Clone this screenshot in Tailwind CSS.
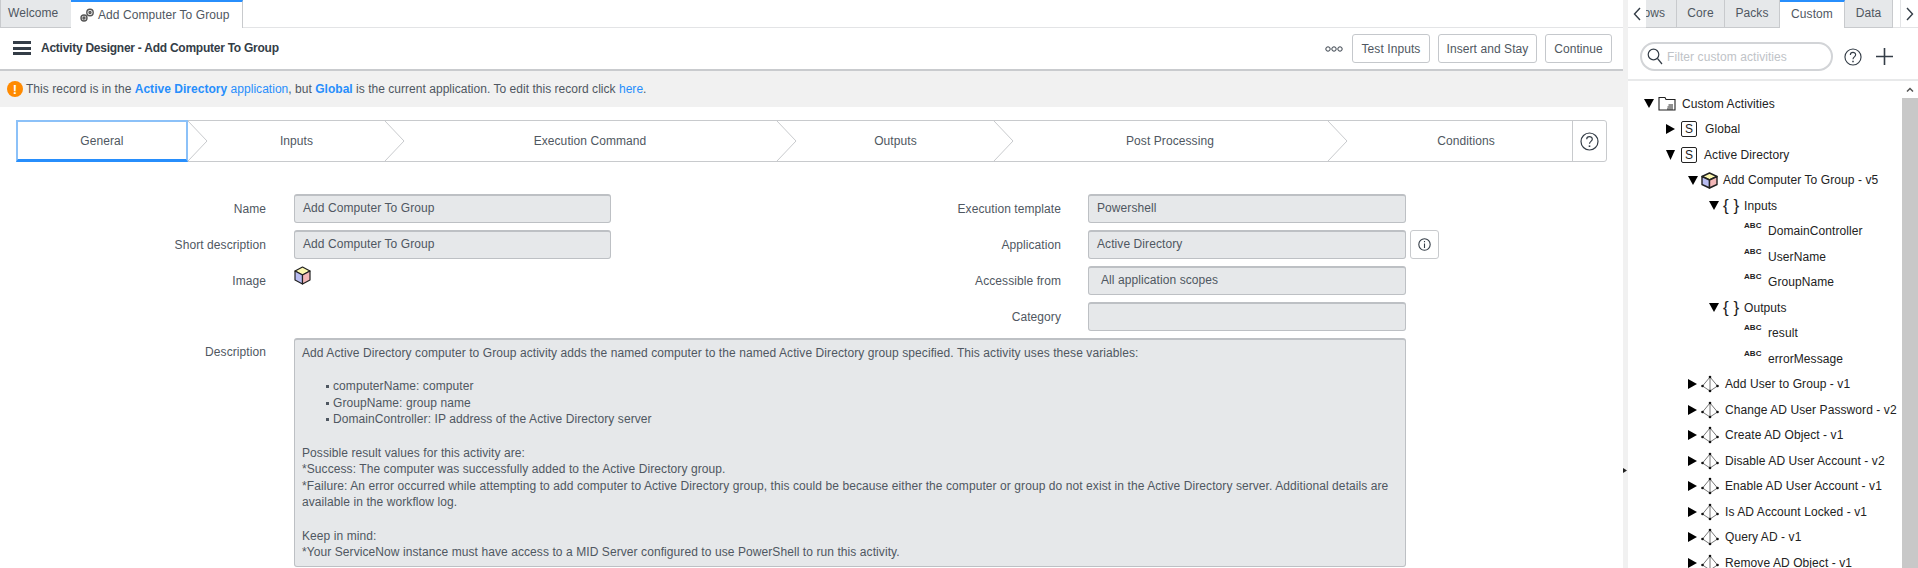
<!DOCTYPE html>
<html lang="en">
<head>
    <meta charset="UTF-8">
    <title>Activity Designer - Add Computer To Group</title>
    <script src="https://cdn.jsdelivr.net/npm/@tailwindcss/browser@4"></script>
</head>
<body class="h-[568px] w-[1918px] overflow-hidden bg-white text-[12px] tracking-[0.08px] text-[#343d47] font-['Liberation_Sans',Arial,sans-serif]">
<div class="flex h-[568px]">

    <!-- Designer column -->
    <div class="w-[1623px] h-full overflow-hidden">
        <!-- Tabs -->
        <div class="flex h-[28px] border-b border-[#e3e4e6]">
            <div class="w-[72px] h-[28px] bg-[#e6e8ea] border border-t-0 border-[#c8cacd] pl-[7px] leading-[26px] text-[#4f5761]">Welcome</div>
            <div class="flex items-center w-[172px] h-[28px] -ml-px bg-white border-t-2 border-t-[#278efc] border-r border-r-[#c8cacd] pl-[8px] gap-[3px] text-[#4f5761]">
                <svg class="w-[16px] h-[16px]" viewBox="0 0 16 16" fill="none" stroke="#555" stroke-width="1.4"><circle cx="5" cy="11" r="3"/><circle cx="5" cy="11" r="1"/><circle cx="11" cy="5.5" r="3.2"/><circle cx="11" cy="5.5" r="1"/></svg>
                <span>Add Computer To Group</span>
            </div>
        </div>

        <!-- Header -->
        <div class="flex items-center h-[43px] border-b-2 border-[#c9cbce]">
            <div class="flex flex-col gap-[2.5px] ml-[13px] mb-[1px] w-[18px]">
                <div class="h-[3px] bg-[#343d47]"></div>
                <div class="h-[3px] bg-[#343d47]"></div>
                <div class="h-[3px] bg-[#343d47]"></div>
            </div>
            <h1 class="ml-[10px] mb-[2px] font-bold text-[12px] tracking-[-0.25px] text-[#343d47]">Activity Designer - Add Computer To Group</h1>
            <div class="ml-auto flex items-center mr-[11px]">
                <svg class="w-[18px] h-[6px] mr-[9px]" viewBox="0 0 18 6" fill="none" stroke="#343d47"><circle cx="3" cy="3" r="2.2"/><circle cx="9" cy="3" r="2.2"/><circle cx="15" cy="3" r="2.2"/></svg>
                <button class="h-[29px] w-[78px] border border-[#c5c8cc] rounded-[3px] text-[#4f5761] bg-white">Test Inputs</button>
                <button class="ml-[8px] h-[29px] w-[99px] border border-[#c5c8cc] rounded-[3px] text-[#4f5761] bg-white">Insert and Stay</button>
                <button class="ml-[8px] h-[29px] w-[67px] border border-[#c5c8cc] rounded-[3px] text-[#4f5761] bg-white">Continue</button>
            </div>
        </div>

        <!-- Warning -->
        <div class="flex items-center h-[36px] bg-[#f1f1f1] pl-[7px] text-[#4f5761]">
            <div class="flex items-center justify-center w-[16px] h-[16px] rounded-full bg-[#ff8a00] text-white font-bold text-[13px] leading-none">!</div>
            <p class="ml-[3px] tracking-[0.03px]">This record is in the <b class="text-[#278efc]">Active Directory</b> <span class="text-[#278efc]">application</span>, but <b class="text-[#278efc]">Global</b> is the current application. To edit this record click <span class="text-[#278efc]">here</span>.</p>
        </div>

        <!-- Stepper -->
        <div class="flex h-[42px] mt-[13px] ml-[16px] w-[1591px] border border-[#c8cacd] rounded-[3px] text-[#4f5761]">
            <div class="flex items-center justify-center w-[172px] -my-px -ml-px border-2 border-[#8cc1f8] border-b-[3px] border-b-[#278efc]">General</div>
            <div class="relative flex items-center justify-center w-[197px] pl-[20px]">
                Inputs
                <svg class="absolute top-0 left-[-1px] w-[22px] h-[40px]" viewBox="0 0 22 40" fill="none" stroke="#c8cacd"><path d="M1 0 L20 20 L1 40"/></svg>
            </div>
            <div class="relative flex items-center justify-center w-[392px] pl-[18px]">
                Execution Command
                <svg class="absolute top-0 left-[-1px] w-[22px] h-[40px]" viewBox="0 0 22 40" fill="none" stroke="#c8cacd"><path d="M1 0 L20 20 L1 40"/></svg>
            </div>
            <div class="relative flex items-center justify-center w-[217px] pl-[20px]">
                Outputs
                <svg class="absolute top-0 left-[-1px] w-[22px] h-[40px]" viewBox="0 0 22 40" fill="none" stroke="#c8cacd"><path d="M1 0 L20 20 L1 40"/></svg>
            </div>
            <div class="relative flex items-center justify-center w-[334px] pl-[18px]">
                Post Processing
                <svg class="absolute top-0 left-[-1px] w-[22px] h-[40px]" viewBox="0 0 22 40" fill="none" stroke="#c8cacd"><path d="M1 0 L20 20 L1 40"/></svg>
            </div>
            <div class="relative flex items-center justify-center w-[244px] pl-[32px]">
                Conditions
                <svg class="absolute top-0 left-[-1px] w-[22px] h-[40px]" viewBox="0 0 22 40" fill="none" stroke="#c8cacd"><path d="M1 0 L20 20 L1 40"/></svg>
            </div>
            <div class="flex items-center justify-center flex-1 border-l border-[#c8cacd]">
                <svg class="w-[19px] h-[19px]" viewBox="0 0 19 19" fill="none" stroke="#343d47" stroke-width="1.2"><circle cx="9.5" cy="9.5" r="8.5"/><path d="M6.7 7.3 C6.7 3.8 12.3 3.8 12.3 7.2 C12.3 9.4 9.5 9.4 9.5 11.8"/><path d="M9.5 13.4 V15" stroke-width="1.6"/></svg>
            </div>
        </div>

        <!-- Form -->
        <div class="flex mt-[32px] text-[#4f5761]">
            <div class="w-[700px]">
                <div class="flex items-center h-[29px] mb-[7px]">
                    <label class="w-[266px] text-right">Name</label>
                    <div class="ml-[28px] w-[317px] h-[29px] bg-[#e6e8ea] border border-[#bdc0c4] border-t-2 rounded-[3px] pl-[8px] leading-[25px]">Add Computer To Group</div>
                </div>
                <div class="flex items-center h-[29px] mb-[7px]">
                    <label class="w-[266px] text-right">Short description</label>
                    <div class="ml-[28px] w-[317px] h-[29px] bg-[#e6e8ea] border border-[#bdc0c4] border-t-2 rounded-[3px] pl-[8px] leading-[25px]">Add Computer To Group</div>
                </div>
                <div class="flex h-[29px] mb-[7px]">
                    <label class="w-[266px] text-right pt-[6px]">Image</label>
                    <svg class="ml-[28px] w-[17px] h-[19px]" viewBox="0 0 17 19" stroke="#222" stroke-width="1.2" stroke-linejoin="round"><path d="M8.5 1 L16 5 L8.5 9 L1 5 Z" fill="#fdf8b0"/><path d="M1 5 L8.5 9 V18 L1 14 Z" fill="#b9bdf2"/><path d="M16 5 L8.5 9 V18 L16 14 Z" fill="#f4b8b8"/></svg>
                </div>
            </div>
            <div>
                <div class="flex items-center h-[29px] mb-[7px]">
                    <label class="w-[361px] text-right">Execution template</label>
                    <div class="ml-[27px] w-[318px] h-[29px] bg-[#e6e8ea] border border-[#bdc0c4] border-t-2 rounded-[3px] pl-[8px] leading-[25px]">Powershell</div>
                </div>
                <div class="flex items-center h-[29px] mb-[7px]">
                    <label class="w-[361px] text-right">Application</label>
                    <div class="ml-[27px] w-[318px] h-[29px] bg-[#e6e8ea] border border-[#bdc0c4] border-t-2 rounded-[3px] pl-[8px] leading-[25px]">Active Directory</div>
                    <div class="flex items-center justify-center ml-[4px] w-[29px] h-[29px] border border-[#c8cacd] rounded-[3px]">
                        <svg class="w-[13px] h-[13px]" viewBox="0 0 13 13" fill="none" stroke="#343d47" stroke-width="1.1"><circle cx="6.5" cy="6.5" r="5.7"/><path d="M6.5 5.5 V10 M6.5 3 V4.3"/></svg>
                    </div>
                </div>
                <div class="flex items-center h-[29px] mb-[7px]">
                    <label class="w-[361px] text-right">Accessible from</label>
                    <div class="ml-[27px] w-[318px] h-[29px] bg-[#e6e8ea] border border-[#bdc0c4] border-t-2 rounded-[3px] pl-[12px] leading-[25px]">All application scopes</div>
                </div>
                <div class="flex items-center h-[29px] mb-[7px]">
                    <label class="w-[361px] text-right">Category</label>
                    <div class="ml-[27px] w-[318px] h-[29px] bg-[#e6e8ea] border border-[#bdc0c4] border-t-2 rounded-[3px]"></div>
                </div>
            </div>
        </div>
        <div class="flex text-[#4f5761]">
            <label class="w-[266px] text-right pt-[5px]">Description</label>
            <div class="ml-[28px] w-[1112px] h-[229px] bg-[#e6e8ea] border border-[#bdc0c4] border-t-2 rounded-[3px] pl-[7px] pt-[5px] leading-[16.6px] whitespace-nowrap">
                Add Active Directory computer to Group activity adds the named computer to the named Active Directory group specified. This activity uses these variables:<br><br>
                <div class="pl-[24px] flex items-center gap-[4px]"><span class="w-[3px] h-[3px] bg-[#4f5761]"></span>computerName: computer</div>
                <div class="pl-[24px] flex items-center gap-[4px]"><span class="w-[3px] h-[3px] bg-[#4f5761]"></span>GroupName: group name</div>
                <div class="pl-[24px] flex items-center gap-[4px]"><span class="w-[3px] h-[3px] bg-[#4f5761]"></span>DomainController: IP address of the Active Directory server</div>
                <br>
                Possible result values for this activity are:<br>
                *Success: The computer was successfully added to the Active Directory group.<br>
                *Failure: An error occurred while attempting to add computer to Active Directory group, this could be because either the computer or group do not exist in the Active Directory server. Additional details are<br>
                available in the workflow log.<br><br>
                Keep in mind:<br>
                *Your ServiceNow instance must have access to a MID Server configured to use PowerShell to run this activity.
            </div>
        </div>
    </div>

    <!-- Gutter -->
    <div class="flex items-center w-[5px] h-full bg-[#f1f1f1]">
        <svg class="mt-[373px] w-[4px] h-[5px]" viewBox="0 0 4 5"><path d="M0 0 L4 2.5 L0 5 Z" fill="#222"/></svg>
    </div>

    <!-- Toolbox -->
    <div class="flex flex-col w-[290px] h-full overflow-hidden text-[#343d47]">
        <div class="flex h-[28px] border-b border-[#e3e4e6]">
            <div class="flex items-center justify-center w-[18px] h-[27px]">
                <svg class="w-[8px] h-[14px]" viewBox="0 0 8 14" fill="none" stroke="#343d47" stroke-width="1.4"><path d="M7 1 L1.5 7 L7 13"/></svg>
            </div>
            <div class="flex justify-end w-[31px] h-[28px] overflow-hidden bg-[#e6e8ea] border-r border-b border-[#c8cacd] pr-[11px] leading-[27px] text-[#4f5761]">Workflows</div>
            <div class="w-[48px] h-[28px] bg-[#e6e8ea] border-r border-b border-[#c8cacd] text-center leading-[27px] text-[#4f5761]">Core</div>
            <div class="w-[55px] h-[28px] bg-[#e6e8ea] border-r border-b border-[#c8cacd] text-center leading-[27px] text-[#4f5761]">Packs</div>
            <div class="w-[65px] h-[28px] bg-white border-t-2 border-t-[#278efc] border-r border-r-[#c8cacd] text-center leading-[25px] text-[#4f5761]">Custom</div>
            <div class="w-[48px] h-[28px] bg-[#e6e8ea] border-r border-b border-[#c8cacd] text-center leading-[27px] text-[#4f5761]">Data</div>
            <div class="flex items-center justify-center flex-1 h-[27px] ml-[7px] border-l border-[#e3e4e6]">
                <svg class="w-[8px] h-[14px]" viewBox="0 0 8 14" fill="none" stroke="#343d47" stroke-width="1.4"><path d="M1 1 L6.5 7 L1 13"/></svg>
            </div>
        </div>

        <div class="flex items-center h-[53px] border-b-2 border-[#e8e9ea] pl-[12px] pt-[6px]">
            <div class="flex items-center w-[193px] h-[29px] border-2 border-[#d2d4d7] rounded-full pl-[5px] gap-[4px]">
                <svg class="w-[16px] h-[17px]" viewBox="0 0 16 17" fill="none" stroke="#343d47" stroke-width="1.2"><circle cx="6.5" cy="6.5" r="5.3"/><path d="M10.5 10.5 L15 16"/></svg>
                <span class="text-[#c0c3c7]">Filter custom activities</span>
            </div>
            <svg class="ml-[11px] w-[18px] h-[18px]" viewBox="0 0 19 19" fill="none" stroke="#343d47" stroke-width="1.2"><circle cx="9.5" cy="9.5" r="8.5"/><path d="M6.7 7.3 C6.7 3.8 12.3 3.8 12.3 7.2 C12.3 9.4 9.5 9.4 9.5 11.8"/><path d="M9.5 13.4 V15" stroke-width="1.6"/></svg>
            <svg class="ml-[14px] w-[17px] h-[17px]" viewBox="0 0 17 17" stroke="#343d47" stroke-width="1.6"><path d="M8.5 0 V17 M0 8.5 H17"/></svg>
        </div>

        <div class="flex flex-1 min-h-0 text-[#222] whitespace-nowrap">
            <div class="flex-1 pt-[10px]">
                <div class="flex items-center h-[25.5px] pl-[16px]">
                    <svg class="w-[10px] h-[9px]" viewBox="0 0 10 9"><path d="M0 0 H10 L5 9 Z"/></svg>
                    <svg class="ml-[4px] w-[18px] h-[15px]" viewBox="0 0 18 15" fill="none" stroke="#222" stroke-width="1.1"><path d="M1 14 V1.5 H7 L8 3.5 H17 V14 Z"/><path d="M10.5 9 H15 M9.5 11 H15 M9 13 H15"/></svg>
                    <span class="ml-[6px]">Custom Activities</span>
                </div>
                <div class="flex items-center h-[25.5px] pl-[38px]">
                    <svg class="w-[9px] h-[10px]" viewBox="0 0 9 10"><path d="M0 0 L9 5 L0 10 Z"/></svg>
                    <span class="flex items-center justify-center ml-[6px] w-[16px] h-[16px] border border-[#222] rounded-[2px] text-[12px] leading-none">S</span>
                    <span class="ml-[8px]">Global</span>
                </div>
                <div class="flex items-center h-[25.5px] pl-[38px]">
                    <svg class="w-[9px] h-[10px]" viewBox="0 0 9 10"><path d="M0 0 H9 L4.5 10 Z"/></svg>
                    <span class="flex items-center justify-center ml-[6px] w-[16px] h-[16px] border border-[#222] rounded-[2px] text-[12px] leading-none">S</span>
                    <span class="ml-[7px]">Active Directory</span>
                </div>
                <div class="flex items-center h-[25.5px] pl-[60px]">
                    <svg class="w-[10px] h-[9px]" viewBox="0 0 10 9"><path d="M0 0 H10 L5 9 Z"/></svg>
                    <svg class="ml-[3px] w-[17px] h-[17px]" viewBox="0 0 17 17" stroke="#222" stroke-width="1.4" stroke-linejoin="round"><path d="M8.5 1 L16 4.5 L8.5 8 L1 4.5 Z" fill="#fdf8b0"/><path d="M1 4.5 L8.5 8 V16 L1 12.5 Z" fill="#b9bdf2"/><path d="M16 4.5 L8.5 8 V16 L16 12.5 Z" fill="#f4b8b8"/></svg>
                    <span class="ml-[5px]">Add Computer To Group - v5</span>
                </div>
                <div class="flex items-center h-[25.5px] pl-[81px]">
                    <svg class="w-[10px] h-[9px]" viewBox="0 0 10 9"><path d="M0 0 H10 L5 9 Z"/></svg>
                    <span class="ml-[4px] w-[16px] text-[17px] leading-none">{ }</span>
                    <span class="ml-[5px]">Inputs</span>
                </div>
                <div class="flex items-center h-[25.5px] pl-[116px]">
                    <span class="w-[18px] -translate-y-[5px] text-[8px] font-bold leading-none">ABC</span>
                    <span class="ml-[6px]">DomainController</span>
                </div>
                <div class="flex items-center h-[25.5px] pl-[116px]">
                    <span class="w-[18px] -translate-y-[5px] text-[8px] font-bold leading-none">ABC</span>
                    <span class="ml-[6px]">UserName</span>
                </div>
                <div class="flex items-center h-[25.5px] pl-[116px]">
                    <span class="w-[18px] -translate-y-[5px] text-[8px] font-bold leading-none">ABC</span>
                    <span class="ml-[6px]">GroupName</span>
                </div>
                <div class="flex items-center h-[25.5px] pl-[81px]">
                    <svg class="w-[10px] h-[9px]" viewBox="0 0 10 9"><path d="M0 0 H10 L5 9 Z"/></svg>
                    <span class="ml-[4px] w-[16px] text-[17px] leading-none">{ }</span>
                    <span class="ml-[5px]">Outputs</span>
                </div>
                <div class="flex items-center h-[25.5px] pl-[116px]">
                    <span class="w-[18px] -translate-y-[5px] text-[8px] font-bold leading-none">ABC</span>
                    <span class="ml-[6px]">result</span>
                </div>
                <div class="flex items-center h-[25.5px] pl-[116px]">
                    <span class="w-[18px] -translate-y-[5px] text-[8px] font-bold leading-none">ABC</span>
                    <span class="ml-[6px]">errorMessage</span>
                </div>
                <div class="flex items-center h-[25.5px] pl-[60px]">
                    <svg class="w-[9px] h-[10px]" viewBox="0 0 9 10"><path d="M0 0 L9 5 L0 10 Z"/></svg>
                    <svg class="ml-[4px] w-[18px] h-[18px]" viewBox="0 0 18 18" fill="none" stroke="#777"><path d="M9 2 L1.5 11 L9 16 L16.5 11 Z M9 2 V16"/><g fill="#111" stroke="none"><circle cx="9" cy="2" r="1.3"/><circle cx="1.5" cy="11" r="1.3"/><circle cx="9" cy="16" r="1.3"/><circle cx="16.5" cy="11" r="1.3"/></g></svg>
                    <span class="ml-[6px]">Add User to Group - v1</span>
                </div>
                <div class="flex items-center h-[25.5px] pl-[60px]">
                    <svg class="w-[9px] h-[10px]" viewBox="0 0 9 10"><path d="M0 0 L9 5 L0 10 Z"/></svg>
                    <svg class="ml-[4px] w-[18px] h-[18px]" viewBox="0 0 18 18" fill="none" stroke="#777"><path d="M9 2 L1.5 11 L9 16 L16.5 11 Z M9 2 V16"/><g fill="#111" stroke="none"><circle cx="9" cy="2" r="1.3"/><circle cx="1.5" cy="11" r="1.3"/><circle cx="9" cy="16" r="1.3"/><circle cx="16.5" cy="11" r="1.3"/></g></svg>
                    <span class="ml-[6px]">Change AD User Password - v2</span>
                </div>
                <div class="flex items-center h-[25.5px] pl-[60px]">
                    <svg class="w-[9px] h-[10px]" viewBox="0 0 9 10"><path d="M0 0 L9 5 L0 10 Z"/></svg>
                    <svg class="ml-[4px] w-[18px] h-[18px]" viewBox="0 0 18 18" fill="none" stroke="#777"><path d="M9 2 L1.5 11 L9 16 L16.5 11 Z M9 2 V16"/><g fill="#111" stroke="none"><circle cx="9" cy="2" r="1.3"/><circle cx="1.5" cy="11" r="1.3"/><circle cx="9" cy="16" r="1.3"/><circle cx="16.5" cy="11" r="1.3"/></g></svg>
                    <span class="ml-[6px]">Create AD Object - v1</span>
                </div>
                <div class="flex items-center h-[25.5px] pl-[60px]">
                    <svg class="w-[9px] h-[10px]" viewBox="0 0 9 10"><path d="M0 0 L9 5 L0 10 Z"/></svg>
                    <svg class="ml-[4px] w-[18px] h-[18px]" viewBox="0 0 18 18" fill="none" stroke="#777"><path d="M9 2 L1.5 11 L9 16 L16.5 11 Z M9 2 V16"/><g fill="#111" stroke="none"><circle cx="9" cy="2" r="1.3"/><circle cx="1.5" cy="11" r="1.3"/><circle cx="9" cy="16" r="1.3"/><circle cx="16.5" cy="11" r="1.3"/></g></svg>
                    <span class="ml-[6px]">Disable AD User Account - v2</span>
                </div>
                <div class="flex items-center h-[25.5px] pl-[60px]">
                    <svg class="w-[9px] h-[10px]" viewBox="0 0 9 10"><path d="M0 0 L9 5 L0 10 Z"/></svg>
                    <svg class="ml-[4px] w-[18px] h-[18px]" viewBox="0 0 18 18" fill="none" stroke="#777"><path d="M9 2 L1.5 11 L9 16 L16.5 11 Z M9 2 V16"/><g fill="#111" stroke="none"><circle cx="9" cy="2" r="1.3"/><circle cx="1.5" cy="11" r="1.3"/><circle cx="9" cy="16" r="1.3"/><circle cx="16.5" cy="11" r="1.3"/></g></svg>
                    <span class="ml-[6px]">Enable AD User Account - v1</span>
                </div>
                <div class="flex items-center h-[25.5px] pl-[60px]">
                    <svg class="w-[9px] h-[10px]" viewBox="0 0 9 10"><path d="M0 0 L9 5 L0 10 Z"/></svg>
                    <svg class="ml-[4px] w-[18px] h-[18px]" viewBox="0 0 18 18" fill="none" stroke="#777"><path d="M9 2 L1.5 11 L9 16 L16.5 11 Z M9 2 V16"/><g fill="#111" stroke="none"><circle cx="9" cy="2" r="1.3"/><circle cx="1.5" cy="11" r="1.3"/><circle cx="9" cy="16" r="1.3"/><circle cx="16.5" cy="11" r="1.3"/></g></svg>
                    <span class="ml-[6px]">Is AD Account Locked - v1</span>
                </div>
                <div class="flex items-center h-[25.5px] pl-[60px]">
                    <svg class="w-[9px] h-[10px]" viewBox="0 0 9 10"><path d="M0 0 L9 5 L0 10 Z"/></svg>
                    <svg class="ml-[4px] w-[18px] h-[18px]" viewBox="0 0 18 18" fill="none" stroke="#777"><path d="M9 2 L1.5 11 L9 16 L16.5 11 Z M9 2 V16"/><g fill="#111" stroke="none"><circle cx="9" cy="2" r="1.3"/><circle cx="1.5" cy="11" r="1.3"/><circle cx="9" cy="16" r="1.3"/><circle cx="16.5" cy="11" r="1.3"/></g></svg>
                    <span class="ml-[6px]">Query AD - v1</span>
                </div>
                <div class="flex items-center h-[25.5px] pl-[60px]">
                    <svg class="w-[9px] h-[10px]" viewBox="0 0 9 10"><path d="M0 0 L9 5 L0 10 Z"/></svg>
                    <svg class="ml-[4px] w-[18px] h-[18px]" viewBox="0 0 18 18" fill="none" stroke="#777"><path d="M9 2 L1.5 11 L9 16 L16.5 11 Z M9 2 V16"/><g fill="#111" stroke="none"><circle cx="9" cy="2" r="1.3"/><circle cx="1.5" cy="11" r="1.3"/><circle cx="9" cy="16" r="1.3"/><circle cx="16.5" cy="11" r="1.3"/></g></svg>
                    <span class="ml-[6px]">Remove AD Object - v1</span>
                </div>
            </div>
            <!-- scrollbar -->
            <div class="flex flex-col w-[16px] h-full">
                <div class="flex items-center justify-center h-[17px]">
                    <svg class="w-[8px] h-[5px]" viewBox="0 0 8 5" fill="none" stroke="#555" stroke-width="1.5"><path d="M1 4.5 L4 1.5 L7 4.5"/></svg>
                </div>
                <div class="flex-1 bg-[#c8c8c8]"></div>
            </div>
        </div>
    </div>
</div>
</body>
</html>
